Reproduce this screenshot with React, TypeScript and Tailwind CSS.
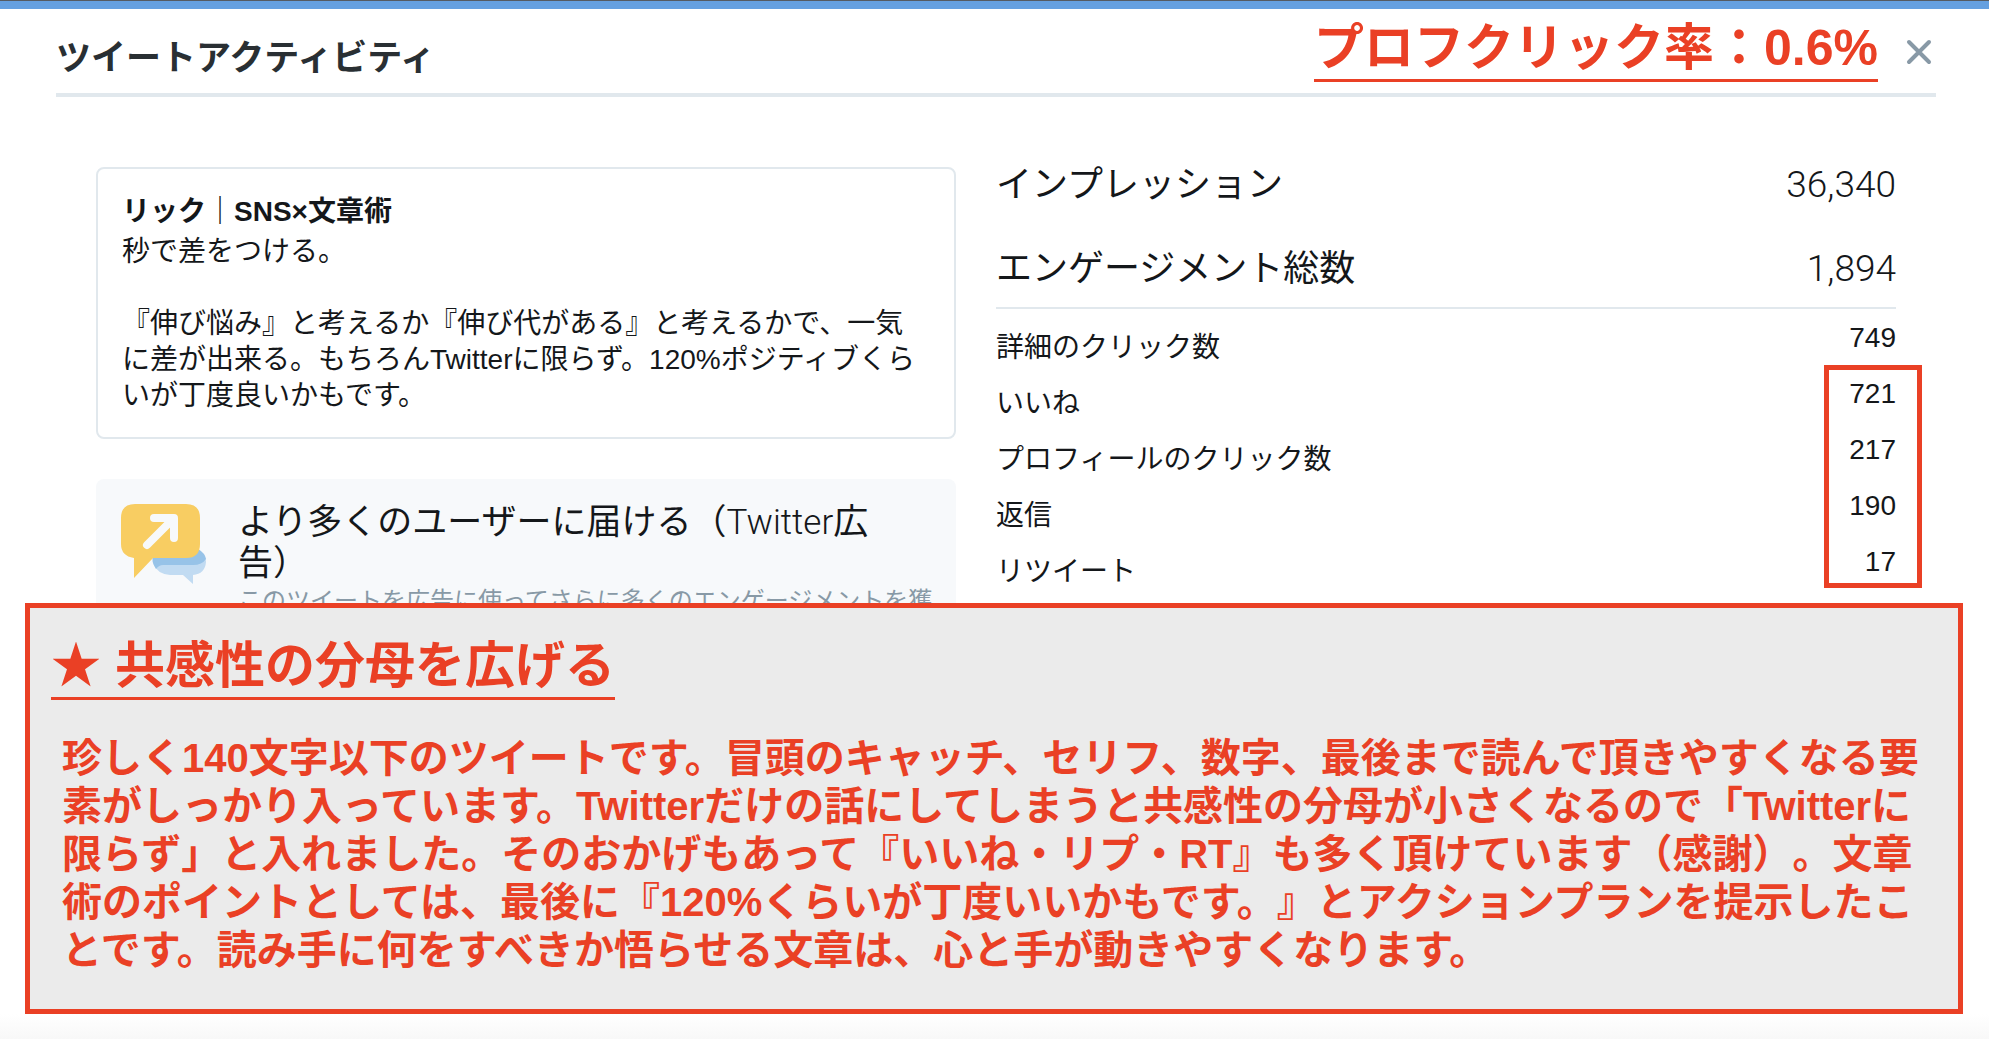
import type { ReactNode } from 'react'

interface Metric {
  label: string
  value: string
}

const totals: Metric[] = [
  { label: 'インプレッション', value: '36,340' },
  { label: 'エンゲージメント総数', value: '1,894' },
]

const details: Metric[] = [
  { label: '詳細のクリック数', value: '749' },
  { label: 'いいね', value: '721' },
  { label: 'プロフィールのクリック数', value: '217' },
  { label: '返信', value: '190' },
  { label: 'リツイート', value: '17' },
]

const noteLines = [
  '珍しく140文字以下のツイートです。冒頭のキャッチ、セリフ、数字、最後まで読んで頂きやすくなる要',
  '素がしっかり入っています。Twitterだけの話にしてしまうと共感性の分母が小さくなるので「Twitterに',
  '限らず」と入れました。そのおかげもあって『いいね・リプ・RT』も多く頂けています（感謝）。文章',
  '術のポイントとしては、最後に『120%くらいが丁度いいかもです。』とアクションプランを提示したこ',
  'とです。読み手に何をすべきか悟らせる文章は、心と手が動きやすくなります。',
]

function Marker({ children }: { children: ReactNode }) {
  return (
    <h2 className="w-fit whitespace-nowrap border-b-[3px] border-[#ea4025] text-[50px] font-bold leading-[62px] text-[#ea4025]">
      {children}
    </h2>
  )
}

function PromoteIcon() {
  return (
    <svg className="mt-[25px] h-[84px] w-[88px] shrink-0" viewBox="0 0 88 84" fill="none" aria-hidden="true">
      <path d="M48 45H76Q86 49 86 58Q85 70 73 71V80L63 71H50Q37 70 33 59Q32 54 35 50Z" fill="#c1dbf2" />
      <path d="M78 45Q85 49 86 55Q82 61 73 61H43Q39 61 36 65Q31 58 33 50Z" fill="#97c3e8" />
      <path d="M15 0H66Q80 0 80 14V40Q80 54 66 54H33L14 74V54Q1 52 1 40V14Q1 0 15 0Z" fill="#f8cd62" />
      <path d="M34 14H54V34M53 15L27 41" stroke="#f7f9fb" strokeWidth="8" strokeLinecap="round" strokeLinejoin="round" />
    </svg>
  )
}

function TweetCard() {
  return (
    <article className="rounded-lg border-2 border-[#e1e8ed] px-6 pb-[23px] pt-[25px] text-[28px] leading-9">
      <h3 className="mb-1 font-bold">リック｜SNS×文章術</h3>
      <p>秒で差をつける。</p>
      <p className="mt-9">
        『伸び悩み』と考えるか『伸び代がある』と考えるかで、一気
        <br />
        に差が出来る。もちろんTwitterに限らず。120%ポジティブくら
        <br />
        いが丁度良いかもです。
      </p>
    </article>
  )
}

function PromoteCard() {
  return (
    <section className="mt-10 flex gap-[30px] whitespace-nowrap rounded-lg bg-[#f7f9fb] pb-8 pl-6">
      <PromoteIcon />
      <div className="pt-[23px]">
        <h3 className="text-[35px] leading-10">
          より多くのユーザーに届ける（<span className="font-['Roboto',sans-serif] font-light">Twitter</span>広
          <br />
          告）
        </h3>
        <p className="text-[24px] leading-9 text-[#8899a6]">
          このツイートを広告に使ってさらに多くのエンゲージメントを獲
        </p>
      </div>
    </section>
  )
}

function Metrics() {
  return (
    <div className="relative">
      <table className="w-full">
        <tbody className="border-b-2 border-[#e1e8ed]">
          {totals.map((m) => (
            <tr key={m.label} className="h-[84px] last:h-[57px]">
              <th scope="row" className="text-left align-top text-4xl font-normal leading-9">{m.label}</th>
              <td className="text-right align-top font-['Roboto',sans-serif] text-[37px] font-light leading-9">{m.value}</td>
            </tr>
          ))}
        </tbody>
      </table>
      <table className="mt-[11px] w-full text-[28px]">
        <tbody>
          {details.map((m) => (
            <tr key={m.label} className="h-14">
              <th scope="row" className="text-left font-normal leading-9">{m.label}</th>
              <td className="text-right align-top leading-9">{m.value}</td>
            </tr>
          ))}
        </tbody>
      </table>
      {/* Highlight around the last four counts */}
      <div className="absolute -right-[26px] top-[198px] h-[223px] w-[98px] border-5 border-[#ea4025]" />
    </div>
  )
}

export default function App() {
  return (
    <div className="min-h-screen overflow-hidden border-t border-[#555b62] bg-white font-['Liberation_Sans','Noto_Sans_CJK_JP',sans-serif] text-[#14171a]" lang="ja">
      <div className="h-2 bg-[#65a0e0]" />
      <div className="pl-14 pr-[53px]">
        <header className="flex items-start justify-between border-b-4 border-[#e1e8ed] pb-[11px] pt-2">
          <h1 className="pt-[21px] text-[35px] font-bold leading-10 text-[#292f33]">ツイートアクティビティ</h1>
          <div className="flex items-start gap-[27px] pr-[3px]">
            <Marker>プロフクリック率：0.6%</Marker>
            <button type="button" aria-label="閉じる" className="mt-[21px]">
              <svg className="size-7" viewBox="0 0 28 28" fill="none" stroke="#8899a6" strokeWidth="4" strokeLinecap="round">
                <path d="M4 4L24 24M24 4L4 24" />
              </svg>
            </button>
          </div>
        </header>

        <main className="grid grid-cols-[860fr_900fr] gap-10 px-10 pt-[70px]">
          <div>
            <TweetCard />
            <PromoteCard />
          </div>
          <Metrics />
        </main>
      </div>

      <section className="relative -mt-12 ml-[25px] mr-[26px] border-5 border-[#ea4025] bg-[#ebebeb] pb-[35px] pl-[21px] pt-[27px]">
        <Marker>★ 共感性の分母を広げる</Marker>
        <p className="mt-[34px] whitespace-nowrap pl-[11px] text-[40px] font-bold leading-[48px] text-[#ea4025] [text-spacing-trim:space-all]">
          {noteLines.map((line) => (
            <span key={line} className="block">{line}</span>
          ))}
        </p>
      </section>
      <div className="h-[25px] bg-linear-to-b from-white to-[#f8f8f8]" />
    </div>
  )
}
